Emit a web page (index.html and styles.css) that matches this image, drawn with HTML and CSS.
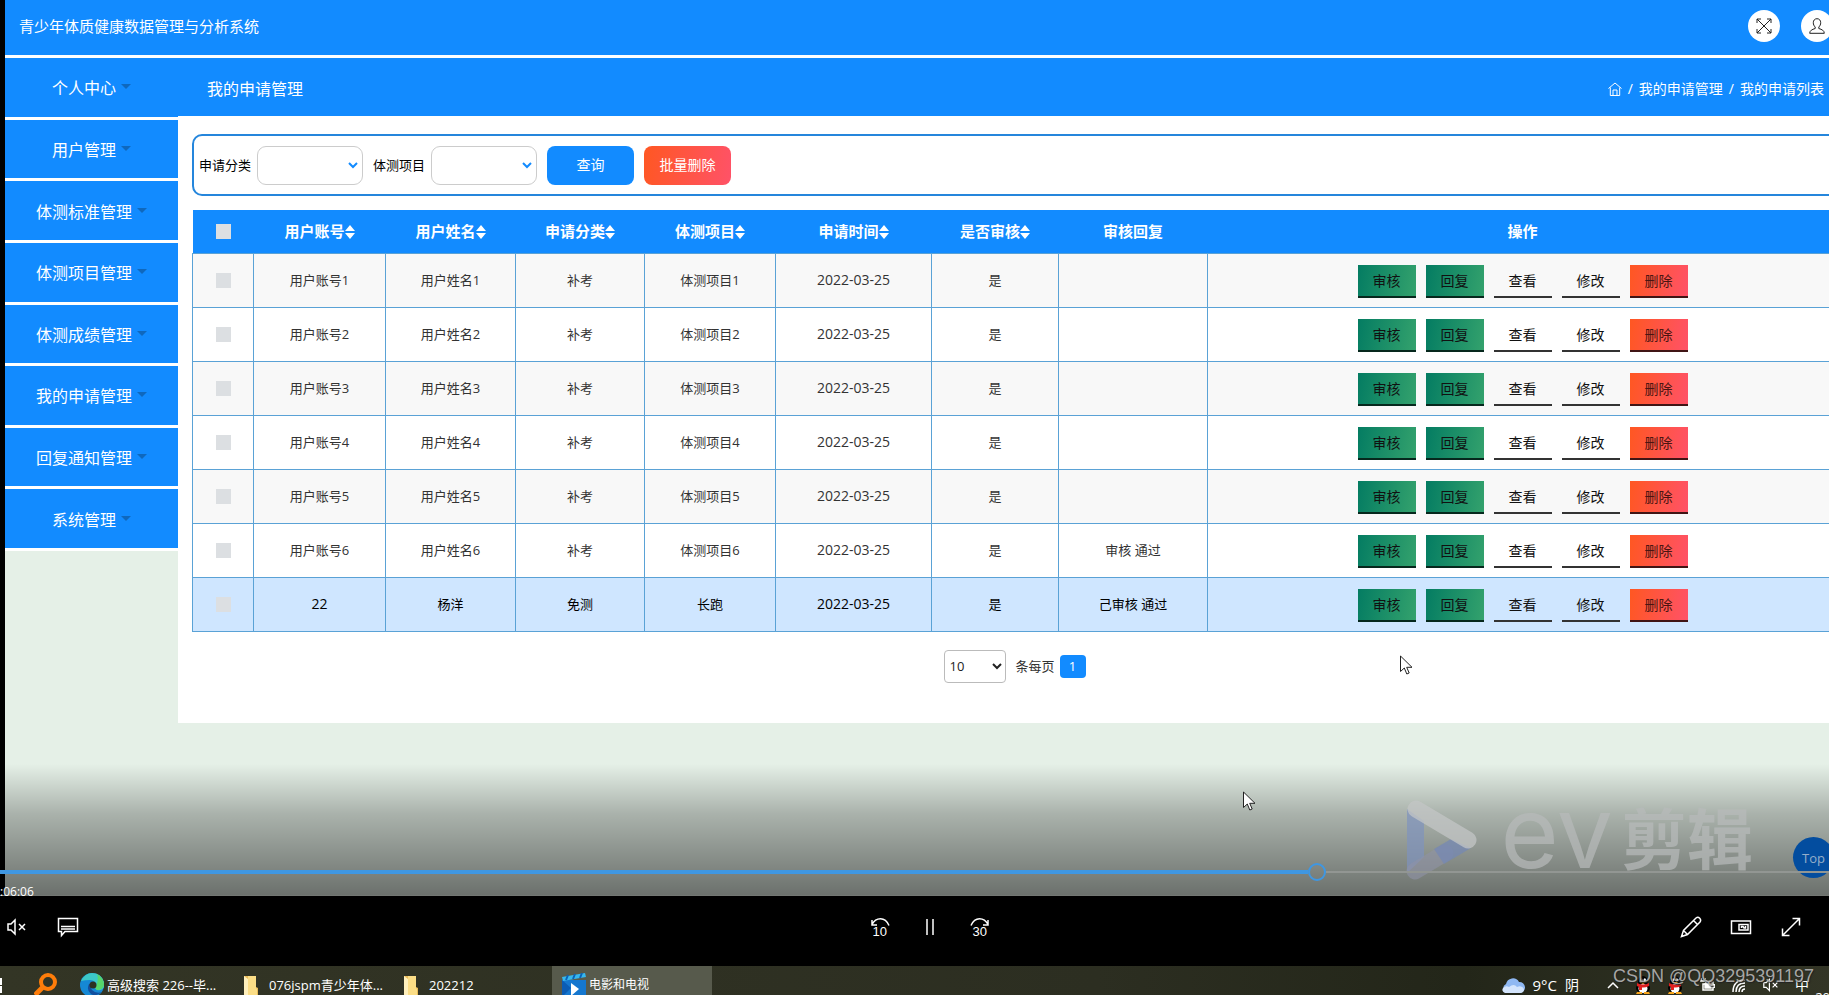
FILE: index.html
```html
<!DOCTYPE html>
<html lang="zh-CN">
<head>
<meta charset="utf-8">
<title>青少年体质健康数据管理与分析系统</title>
<link rel="stylesheet" href="styles.css">
</head>
<body>
<svg class="defs" aria-hidden="true">
  <symbol id="sort" viewBox="0 0 10 14"><path d="M5 0l5 6H0zM5 14l5-6H0z"/></symbol>
  <symbol id="folder" viewBox="0 0 16 20"><path fill="#e9bb58" d="M1 1h12v11l2 1v7H1z"/><path fill="#fbdd86" d="M5 1h8v12l1 1v6H5z"/><path fill="#fff0bd" d="M1 1l4 3v16H1z"/></symbol>
  <symbol id="mute" viewBox="0 0 20 18"><path fill="none" stroke="currentColor" stroke-width="1.5" d="M1 6h3l4-4v14l-4-4H1zM12 6l6 6M18 6l-6 6"/></symbol>
  <symbol id="qq" viewBox="0 0 16 18"><ellipse cx="8" cy="6" rx="5" ry="6"/><ellipse cx="8" cy="12" rx="7" ry="5"/><ellipse cx="8" cy="12.500" rx="4.500" ry="4.500" fill="#fff"/><ellipse cx="6.200" cy="3.800" rx="1.200" ry="1.600" fill="#fff"/><ellipse cx="9.800" cy="3.800" rx="1.200" ry="1.600" fill="#fff"/><path fill="#f7a51c" d="M4.500 6h7L8 8zM2 16h5v2H1zM9 16h5l1 2H9z"/><path fill="#e02020" d="M2 7q6 3 12 0v3q-4 2-7 1.500V14H4v-3L2 10z"/></symbol>
  <symbol id="pointer" viewBox="0 0 13 20"><path fill="#fff" stroke="#222" d="M.5 1v15.500L4.300 13l2.500 6 2.400-1-2.500-5.700h5.300z"/></symbol>
</svg>

<main class="video">
  <div class="app">
    <header class="topbar">
      <h1 class="brand">青少年体质健康数据管理与分析系统</h1>
      <div class="tools">
        <button class="round" aria-label="全屏"><svg viewBox="0 0 16 16"><path d="M1 1l14 14M15 1L1 15M1 5V1h4M11 1h4v4M15 11v4h-4M5 15H1v-4"/></svg></button>
        <button class="round" aria-label="用户"><svg viewBox="0 0 16 16"><path d="M8 .7c-2.400 0-3.700 1.800-3.700 4 0 1.700.7 3.300 1.900 4.300v1.500C3 11.500.8 12.500.7 15.300h14.600c-.1-2.800-2.300-3.800-5.500-4.800V9c1.200-1 1.900-2.600 1.900-4.300 0-2.200-1.300-4-3.700-4z"/></svg></button>
      </div>
    </header>
    <div class="layout">
      <nav class="side">
        <a href="#">个人中心</a><a href="#">用户管理</a><a href="#">体测标准管理</a><a href="#">体测项目管理</a><a href="#">体测成绩管理</a><a href="#">我的申请管理</a><a href="#">回复通知管理</a><a href="#">系统管理</a>
      </nav>
      <section class="page">
        <div class="crumbbar">
          <h2 class="pagetitle">我的申请管理</h2>
          <div class="crumbs">
            <a href="#" aria-label="首页"><svg viewBox="0 0 14 14"><path d="M.5 6.500L7 1l6.500 5.500M2.300 5.500v8h9.400v-8M5 13.500V8h4v5.500"/></svg></a>
            <span>/</span><a href="#">我的申请管理</a><span>/</span><a href="#">我的申请列表</a>
          </div>
        </div>
        <div class="card">
          <form class="search">
            <label for="kind">申请分类</label><select id="kind" class="pick"><option></option></select>
            <label for="item">体测项目</label><select id="item" class="pick"><option></option></select>
            <button type="button" class="btn">查询</button>
            <button type="button" class="btn danger">批量删除</button>
          </form>
          <table class="grid">
            <colgroup><col class="c-check"><col class="c-acc"><col class="c-name"><col class="c-kind"><col class="c-item"><col class="c-date"><col class="c-ok"><col class="c-reply"><col></colgroup>
            <thead><tr>
              <th><input type="checkbox" aria-label="全选"></th>
              <th>用户账号<svg><use href="#sort"/></svg></th><th>用户姓名<svg><use href="#sort"/></svg></th><th>申请分类<svg><use href="#sort"/></svg></th><th>体测项目<svg><use href="#sort"/></svg></th><th>申请时间<svg><use href="#sort"/></svg></th><th>是否审核<svg><use href="#sort"/></svg></th><th>审核回复</th><th>操作</th>
            </tr></thead>
            <tbody>
              <tr><td><input type="checkbox" aria-label="选择 1"></td><td>用户账号1</td><td>用户姓名1</td><td>补考</td><td>体测项目1</td><td class="num">2022-03-25</td><td>是</td><td></td><td><div class="ops"><button class="go">审核</button><button class="go">回复</button><button>查看</button><button>修改</button><button class="del">删除</button></div></td></tr>
              <tr><td><input type="checkbox" aria-label="选择 2"></td><td>用户账号2</td><td>用户姓名2</td><td>补考</td><td>体测项目2</td><td class="num">2022-03-25</td><td>是</td><td></td><td><div class="ops"><button class="go">审核</button><button class="go">回复</button><button>查看</button><button>修改</button><button class="del">删除</button></div></td></tr>
              <tr><td><input type="checkbox" aria-label="选择 3"></td><td>用户账号3</td><td>用户姓名3</td><td>补考</td><td>体测项目3</td><td class="num">2022-03-25</td><td>是</td><td></td><td><div class="ops"><button class="go">审核</button><button class="go">回复</button><button>查看</button><button>修改</button><button class="del">删除</button></div></td></tr>
              <tr><td><input type="checkbox" aria-label="选择 4"></td><td>用户账号4</td><td>用户姓名4</td><td>补考</td><td>体测项目4</td><td class="num">2022-03-25</td><td>是</td><td></td><td><div class="ops"><button class="go">审核</button><button class="go">回复</button><button>查看</button><button>修改</button><button class="del">删除</button></div></td></tr>
              <tr><td><input type="checkbox" aria-label="选择 5"></td><td>用户账号5</td><td>用户姓名5</td><td>补考</td><td>体测项目5</td><td class="num">2022-03-25</td><td>是</td><td></td><td><div class="ops"><button class="go">审核</button><button class="go">回复</button><button>查看</button><button>修改</button><button class="del">删除</button></div></td></tr>
              <tr><td><input type="checkbox" aria-label="选择 6"></td><td>用户账号6</td><td>用户姓名6</td><td>补考</td><td>体测项目6</td><td class="num">2022-03-25</td><td>是</td><td>审核 通过</td><td><div class="ops"><button class="go">审核</button><button class="go">回复</button><button>查看</button><button>修改</button><button class="del">删除</button></div></td></tr>
              <tr class="hover"><td><input type="checkbox" aria-label="选择 7"></td><td class="num">22</td><td>杨洋</td><td>免测</td><td>长跑</td><td class="num">2022-03-25</td><td>是</td><td>己审核 通过</td><td><div class="ops"><button class="go">审核</button><button class="go">回复</button><button>查看</button><button>修改</button><button class="del">删除</button></div></td></tr>
            </tbody>
          </table>
          <div class="pager">
            <select id="size"><option>10</option></select><label for="size">条每页</label><button class="current">1</button>
          </div>
        </div>
      </section>
    </div>
  </div>
  <div class="shade"></div>
  <div class="evmark" aria-hidden="true">
    <svg viewBox="0 0 72 82"><path fill="#7f93bd" opacity=".7" d="M1 10l17 12v36L1 74z"/><path stroke="#9093a6" stroke-width="17" stroke-linecap="round" opacity=".6" d="M9 72l30-18"/><path fill="#7488b5" opacity=".7" d="M28 50l17-10 20 9-27 16z"/><path stroke="#c3c6c6" stroke-width="17" stroke-linecap="round" opacity=".75" d="M10 10l52 31"/></svg>
    <span class="ev">ev</span><span class="cut">剪辑</span>
  </div>
  <button class="totop">Top</button>
  <svg class="pointer p1"><use href="#pointer"/></svg>
  <svg class="pointer p2"><use href="#pointer"/></svg>
  <input class="seek" type="range" min="0" max="1000" value="722" aria-label="播放进度">
</main>

<section class="controls">
  <span class="elapsed">:06:06</span>
  <div class="group">
    <button aria-label="静音"><svg viewBox="0 0 20 18"><use href="#mute"/></svg></button>
    <button aria-label="字幕"><svg viewBox="0 0 22 20"><path d="M1.500 1.500h19v13H8l-3.500 4v-4h-3zM4 9.500h14M4 12h14"/></svg></button>
  </div>
  <div class="group mid">
    <button aria-label="后退 10 秒"><svg viewBox="0 0 20 20"><path d="M2 3v5h5M2 7.500Q5 1.800 10.500 1.800T19 8.500"/></svg><span>10</span></button>
    <button aria-label="暂停"><svg viewBox="0 0 20 20"><path d="M7 2v16M13 2v16"/></svg></button>
    <button aria-label="前进 30 秒"><svg viewBox="0 0 20 20"><path d="M18 3v5h-5M18 7.500Q15 1.800 9.500 1.800T1 8.500"/></svg><span>30</span></button>
  </div>
  <div class="group right">
    <button aria-label="编辑"><svg viewBox="0 0 22 22"><path d="M1.500 20.500l2-6L16 2q2-1.500 3.700.3T20 6L7.500 18.500zM3.500 14.500l4 4M13.500 4.500l4 4"/></svg></button>
    <button aria-label="小窗口"><svg viewBox="0 0 22 22"><path d="M1.500 5h19v12.500h-19zM9 8.500h9v5.500H9zM11.500 12v-1.500h1.500l1 1.500h1.500v-2"/></svg></button>
    <button aria-label="全屏"><svg viewBox="0 0 22 22"><path d="M2.500 19.500l17-17M12.500 2.500h7v7M2.500 12.500v7h7"/></svg></button>
  </div>
</section>

<footer class="taskbar">
  <svg class="win" viewBox="0 0 2 18"><path fill="#fff" d="M0 2h2v7H0zM0 10h2v7H0z"/></svg>
  <svg class="find" viewBox="0 0 24 24"><circle cx="14" cy="9" r="7" fill="none" stroke="#ff7d0a" stroke-width="4"/><path stroke="#ff7d0a" stroke-width="5" d="M9 14l-8 8"/></svg>
  <a class="task t-edge" href="#"><svg class="i24" viewBox="0 0 24 24"><circle cx="12" cy="12" r="12" fill="#1588d4"/><path fill="#3cc8c8" d="M1 8Q5 0 12 0q9 0 12 9v5q-2 4-7 3-3-2-1-4 0-6-6-6-5 0-9 1z"/><path fill="#56d66c" d="M17 1q7 4 7 11-1 5-7 5-3-2-1-4 3-6 1-12z"/><path fill="#124f9f" d="M9 11q-3 6 2 10 5 3 11-2-6 2-10-2-2-3-1-6z"/><circle cx="13" cy="12" r="3.500" fill="#2d3022"/></svg>高级搜索 226--毕...</a>
  <a class="task t-dir" href="#"><svg class="i16"><use href="#folder"/></svg>076jspm青少年体...</a>
  <a class="task t-dir2" href="#"><svg class="i16"><use href="#folder"/></svg>202212</a>
  <a class="task active" href="#"><svg class="i24" viewBox="0 0 24 24"><path fill="#1577cf" d="M0 7h24v17H0z"/><path fill="#0b5cb5" d="M0 7l9 8-9 9z"/><path fill="#36b7ee" d="M0 4l23-4 1 4L1 8z"/><path stroke="#0a62b8" stroke-width="2" d="M6 2l-2 5M13 1l-2 5M20 0l-2 5"/><path fill="#fff" d="M9 10l8 6-8 7z"/></svg>电影和电视</a>
  <div class="tray">
    <svg class="cloud" viewBox="0 0 24 16"><path fill="#8fb8f2" d="M5 16a5 5 0 0 1 0-9 7 7 0 0 1 13-2 5.500 5.500 0 0 1 1 11z"/><path fill="#d3e4fc" d="M4 16q-4-2-2-5 3-3 6-1 5-4 8 0 5-2 7 2 0 4-4 4z"/></svg>
    <span class="temp">9°C</span><span class="sky">阴</span>
    <svg class="up" viewBox="0 0 12 8"><path d="M1 7l5-5 5 5"/></svg>
    <svg class="i16 qq"><use href="#qq"/></svg><svg class="i16 qq"><use href="#qq"/></svg>
    <svg class="i16" viewBox="0 0 16 16"><path d="M2 1v3M6 1v3M1 4h6v3H4v6h10V5H8M15.500 7v4"/><path fill="#fff" d="M6 7h6v4H6z"/></svg>
    <svg class="i16" viewBox="0 0 16 16"><path d="M2 15Q2 3 14 3M5 15q0-9 9-9M8 15q0-6 6-6M11 15q0-3 3-3"/></svg>
    <svg class="i16" viewBox="0 0 20 18"><use href="#mute"/></svg>
    <span class="ime">中</span>
  </div>
  <span class="clock">20</span>
  <span class="csdn">CSDN @QQ3295391197</span>
</footer>
</body>
</html>
```
FILE: styles.css
```css
* { box-sizing: border-box; }
body {
  margin: 0;
  height: 100vh;
  display: flex;
  flex-direction: column;
  overflow: hidden;
  background: #000;
  color: #333;
  font: 13px/20px "Open Sans", "Noto Sans CJK SC", sans-serif;
}
button, select, input { font: inherit; margin: 0; }
button { border: 0; padding: 0; background: none; color: inherit; }
a { color: inherit; text-decoration: none; }
h1, h2 { margin: 0; font-weight: 400; }
svg { display: block; flex: none; }
.defs { position: absolute; width: 0; height: 0; }

.video { position: relative; flex: 1; min-height: 0; overflow: hidden; }
.app { margin: 0 -24px 0 5px; min-height: 100%; background: #e5f0e7; }

.topbar {
  display: flex;
  align-items: center;
  justify-content: space-between;
  height: 58px;
  padding: 0 20px 4px 14px;
  background: #128bff;
  border-bottom: 3px solid #fff;
  color: #fff;
}
.brand { font-size: 15px; }
.tools { display: flex; gap: 21px; }
.round {
  display: grid;
  place-items: center;
  width: 32px;
  height: 32px;
  border-radius: 50%;
  background: #fff;
}
.round svg { width: 16px; height: 16px; fill: none; stroke: #222; }

.layout { display: flex; align-items: flex-start; }
.side {
  display: grid;
  grid-auto-rows: 1fr;
  width: 173px;
  min-height: 493px;
  color: #fff;
  font-size: 16px;
}
.side a {
  display: flex;
  align-items: center;
  justify-content: center;
  gap: 5px;
  padding-top: 2px;
  background: #128bff;
  border-bottom: 3px solid #fff;
}
.side a::after {
  content: "";
  margin-bottom: 3px;
  border: 5px solid transparent;
  border-top-color: #0f68bd;
  border-bottom: 0;
}
.page { flex: 1; min-width: 0; }
.crumbbar {
  display: flex;
  align-items: center;
  justify-content: space-between;
  height: 61px;
  padding: 3px 29px 0 29px;
  background: #128bff;
  border-bottom: 3px solid #fff;
  color: #fff;
}
.pagetitle { font-size: 16px; }
.crumbs { display: flex; align-items: center; gap: 6px; font-size: 14px; }
.crumbs svg { width: 14px; height: 14px; fill: none; stroke: #fff; }

.card { padding: 15px 15px 40px 14px; background: #fff; }
.search {
  display: flex;
  align-items: center;
  gap: 10px;
  height: 62px;
  padding: 0 5px;
  border: 2px solid #2586dc;
  border-radius: 10px;
  color: #000;
}
.search label { margin-right: -4px; }
.pick {
  appearance: none;
  width: 106px;
  height: 39px;
  border: 1px solid #ccc;
  border-radius: 9px;
  background: #fff url("data:image/svg+xml,%3Csvg xmlns='http://www.w3.org/2000/svg' width='10' height='7'%3E%3Cpath d='M1 1l4 4 4-4' fill='none' stroke='%23128bff' stroke-width='2'/%3E%3C/svg%3E") no-repeat right 4px center;
}
.btn {
  width: 87px;
  height: 39px;
  border-radius: 8px;
  background: #128bff;
  color: #fff;
  font-size: 14px;
}
.danger { background: linear-gradient(100deg, #ff5722, #ff5268); }

.grid {
  width: 100%;
  margin-top: 14px;
  table-layout: fixed;
  border-collapse: collapse;
  text-align: center;
}
.c-check { width: 61px; }
.c-acc { width: 132px; }
.c-name { width: 130px; }
.c-kind { width: 129px; }
.c-item { width: 131px; }
.c-date { width: 156px; }
.c-ok { width: 127px; }
.c-reply { width: 149px; }
.grid th {
  height: 43px;
  padding: 0;
  background: #128bff;
  color: #fff;
  font-size: 15px;
}
.grid th svg { display: inline-block; width: 10px; height: 14px; fill: #fff; vertical-align: -2px; }
.grid td { height: 54px; padding: 0; border: 1px solid #5aa2d6; }
.grid tbody tr:nth-child(odd) { background: #f8f8f8; }
.grid tbody tr.hover:nth-child(n) { background: #cfe6ff; color: #000; }
.grid .num { font-size: 14px; }
.grid input {
  appearance: none;
  display: block;
  width: 15px;
  height: 15px;
  margin: 0 auto;
  background: #dcdfe2;
}
.ops { display: flex; justify-content: center; gap: 10px; padding-top: 3px; }
.ops button {
  width: 58px;
  height: 33px;
  border-bottom: 2px solid #333;
  color: #111;
  font-size: 14px;
}
.ops .go { background: linear-gradient(100deg, #047c62, #34a26d) border-box; border-color: #06281d; }
.ops .del { background: linear-gradient(100deg, #ff5722, #ff5268) border-box; border-color: #401515; color: #4a1512; }

.pager { display: flex; align-items: center; justify-content: center; margin-top: 18px; }
.pager select {
  width: 62px;
  height: 33px;
  padding: 0;
  border: 1px solid #bbb;
  border-radius: 4px;
  background: #fff;
  color: #222;
}
.pager label { margin: 0 5px 0 9px; }
.current { width: 26px; height: 23px; border-radius: 4px; background: #128bff; color: #fff; }

.shade {
  position: absolute;
  inset: auto 0 0;
  height: 132px;
  background: linear-gradient(rgba(0, 0, 0, 0), rgba(0, 0, 0, .26) 38%, rgba(0, 0, 0, .4) 70%, rgba(0, 0, 0, .53));
  border-bottom: 1px solid #737773;
}
.evmark {
  position: absolute;
  right: 76px;
  bottom: 14px;
  display: flex;
  align-items: center;
  gap: 8px;
  color: rgba(184, 187, 187, .7);
}
.evmark svg { width: 72px; height: 82px; margin-right: 14px; fill: none; }
.ev, .cut { height: 84px; }
.ev { font: 100px/68px Inter, sans-serif; }
.cut { font-size: 66px; line-height: 80px; font-weight: 700; }
.totop {
  position: absolute;
  right: -5px;
  bottom: 18px;
  width: 41px;
  height: 41px;
  border-radius: 50%;
  background: #034d9f;
  color: #95adc9;
}
.pointer { position: absolute; width: 13px; height: 20px; }
.p1 { left: 1400px; top: 655px; }
.p2 { left: 1243px; top: 791px; }
.seek {
  position: absolute;
  left: 0;
  bottom: 15px;
  width: 100%;
  height: 18px;
  appearance: none;
  background: linear-gradient(#3f97e2, #3f97e2) 0 7px / 1308px 4px no-repeat, linear-gradient(#929693, #929693) 100% 8px / calc(100% - 1326px) 2px no-repeat;
}
.seek::-webkit-slider-thumb {
  appearance: none;
  width: 18px;
  height: 18px;
  border: 2px solid #3f97e2;
  border-radius: 50%;
  background: transparent;
}

.controls {
  position: relative;
  display: grid;
  grid-template-columns: 1fr auto 1fr;
  align-items: center;
  height: 70px;
  padding: 0 27px 8px 7px;
  color: #fff;
}
.elapsed { position: absolute; left: 0; top: -14px; font-size: 12px; }
.group { display: flex; gap: 30px; }
.mid { padding-left: 50px; }
.right { justify-content: flex-end; gap: 28px; }
.controls button { position: relative; }
.controls svg { width: 22px; height: 22px; fill: none; stroke: #fff; stroke-width: 1.5; }
.controls .group:first-of-type button:first-child svg { width: 20px; }
.controls .mid svg { width: 20px; height: 20px; }
.mid span { position: absolute; left: 3px; top: 7px; font: 13px/16px "Liberation Sans", sans-serif; }

.taskbar {
  position: relative;
  display: flex;
  align-items: center;
  height: 29px;
  padding-top: 8px;
  background: linear-gradient(90deg, #333525, #2c2e21 60%, #232619 80%, #333526);
  color: #fff;
  overflow: hidden;
}
.win { width: 2px; height: 18px; }
.find { width: 24px; height: 24px; margin: 0 22px 0 32px; }
.task { display: flex; align-items: center; gap: 3px; height: 29px; white-space: nowrap; }
.i24 { width: 24px; height: 24px; }
.i16 { width: 16px; height: 20px; }
.t-edge { width: 163px; }
.t-dir { width: 160px; }
.t-dir2 { width: 149px; }
.t-dir, .t-dir2 { gap: 10px; }
.task.active { width: 160px; margin-top: -8px; padding: 8px 10px 0; background: #575a4c; font-size: 12px; }
.tray { display: flex; align-items: center; gap: 16px; margin-left: auto; padding-right: 20px; }
.tray svg { fill: none; stroke: #fff; stroke-width: 1.5; }
.tray .cloud { width: 24px; height: 16px; stroke: none; }
.tray .qq { fill: #000; stroke: none; }
.temp { margin-left: -8px; font-size: 15px; }
.sky { margin: 0 12px 0 -8px; font-size: 14px; }
.up { width: 12px; height: 8px; }
.ime { font-size: 14px; }
.clock { position: absolute; right: -1px; bottom: -12px; font-size: 13px; }
.csdn {
  position: absolute;
  right: 15px;
  top: 0;
  color: rgba(190, 190, 190, .85);
  font: 18px/20px "Liberation Sans", sans-serif;
  text-shadow: 1px 1px 1px #222;
}
```
